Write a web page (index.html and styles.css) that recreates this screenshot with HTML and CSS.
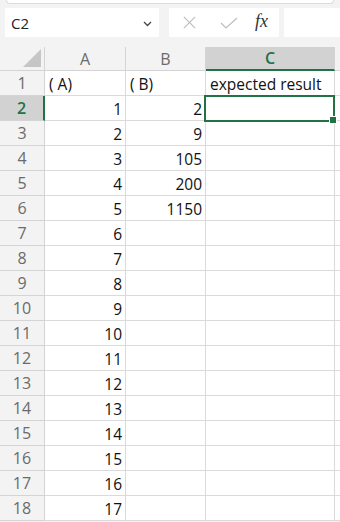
FILE: index.html
```html
<!DOCTYPE html>
<html lang="en">
<head>
  <meta charset="UTF-8" />
  <title>Sheet</title>
  <link rel="stylesheet" href="styles.css">
</head>
<body>
  <div class="ribbon-edge"></div>

  <div class="formula-bar">
    <div class="name-box">
      <span>C2</span>
      <svg class="chev" width="9" height="6" viewBox="0 0 9 6"><path d="M1 1 L4.5 4.5 L8 1" fill="none" stroke="#444" stroke-width="1.3"/></svg>
    </div>
    <div class="fx-buttons">
      <svg width="15" height="15" viewBox="0 0 16 16"><path d="M2 2 L14 14 M14 2 L2 14" stroke="#bdbdbd" stroke-width="1.2"/></svg>
      <svg width="18" height="16" viewBox="0 0 18 16"><path d="M1 8 L6 13 L17 3" fill="none" stroke="#bdbdbd" stroke-width="1.2"/></svg>
      <span class="fx">fx</span>
    </div>
    <div class="formula-input"></div>
  </div>

  <div class="sheet" id="sheet"></div>

  <script>
    const rows = [
      ["( A)", "( B)", "expected result"],
      [1, 2, ""],
      [2, 9, ""],
      [3, 105, ""],
      [4, 200, ""],
      [5, 1150, ""]
    ];
    for (let i = 6; i <= 17; i++) rows.push([i, "", ""]);

    const sheet = document.getElementById("sheet");
    let html = '<div class="corner"><span class="tri"></span></div>';
    ["A", "B", "C"].forEach((c) => {
      html += `<div class="col-head${c === "C" ? " sel" : ""}">${c}</div>`;
    });
    html += '<div class="col-head"></div>';

    rows.forEach((r, idx) => {
      const n = idx + 1;
      html += `<div class="row-head${n === 2 ? " sel" : ""}">${n}</div>`;
      r.forEach((v, ci) => {
        const num = typeof v === "number";
        const active = n === 2 && ci === 2;
        html += `<div class="cell${num ? " num" : ""}${active ? " active" : ""}">${v}</div>`;
      });
      html += '<div class="cell"></div>';
    });
    sheet.innerHTML = html;
  </script>
</body>
</html>
```

FILE: styles.css
```css
* {
  margin: 0;
  padding: 0;
  box-sizing: border-box;
}
body {
  width: 340px;
  height: 522px;
  overflow: hidden;
  background: #f3f3f3;
  font-family: "Open Sans", "Noto Sans", sans-serif;
}
.ribbon-edge {
  height: 4px;
  margin: 0 6px;
  background: #fff;
  border: 1px solid #dcdcdc;
  border-top: none;
  border-radius: 0 0 6px 6px;
}
.formula-bar {
  display: flex;
  align-items: stretch;
  height: 29px;
  margin-top: 4px;
  padding-left: 5px;
}
.name-box {
  width: 154px;
  background: #fff;
  display: flex;
  align-items: center;
  justify-content: space-between;
  padding: 0 7px 0 6px;
  font-size: 15px;
  color: #222;
}
.chev {
  margin-top: 2px;
}
.fx-buttons {
  width: 110px;
  margin-left: 10px;
  background: #fff;
  display: flex;
  align-items: center;
  padding-left: 13px;
}
.fx-buttons svg + svg {
  margin-left: 23px;
}
.fx {
  font-family: "Liberation Serif", serif;
  font-style: italic;
  font-size: 18px;
  color: #333;
  margin-left: 17px;
  margin-top: -3px;
}
.formula-input {
  flex: 1;
  margin-left: 5px;
  background: #fff;
}
.sheet {
  margin-top: 10px;
  display: grid;
  grid-template-columns: 45px 81px 80px 129px 1fr;
  grid-template-rows: 24px;
  grid-auto-rows: 25px;
  background: #fff;
}
.corner,
.col-head,
.row-head {
  background: #f3f3f3;
  color: #6b6b6b;
  border-right: 1px solid #d4d4d4;
  border-bottom: 1px solid #d4d4d4;
  font-size: 16px;
  display: flex;
  align-items: center;
  justify-content: center;
}
.corner {
  position: relative;
}
.tri {
  position: absolute;
  right: 3px;
  bottom: 3px;
  width: 0;
  height: 0;
  border-left: 18px solid transparent;
  border-bottom: 18px solid #c6c6c6;
}
.col-head.sel {
  background: #d2d2d2;
  color: #217346;
  border-bottom: 2px solid #217346;
  font-weight: 600;
}
.row-head.sel {
  background: #d2d2d2;
  color: #217346;
  border-right: 2px solid #217346;
  font-weight: 600;
}
.cell {
  border-right: 1px solid #dadada;
  border-bottom: 1px solid #dadada;
  font-size: 15.5px;
  color: #111;
  padding: 0 3px 0 4px;
  display: flex;
  align-items: flex-end;
  white-space: nowrap;
}
.cell.num {
  justify-content: flex-end;
}
.cell.active {
  position: relative;
  border: 2px solid #217346;
  margin: -1px 0 -1px -2px;
  z-index: 1;
}
.cell.active::after {
  content: "";
  position: absolute;
  right: -4px;
  bottom: -4px;
  width: 6px;
  height: 6px;
  background: #217346;
  border: 1px solid #fff;
}
```
